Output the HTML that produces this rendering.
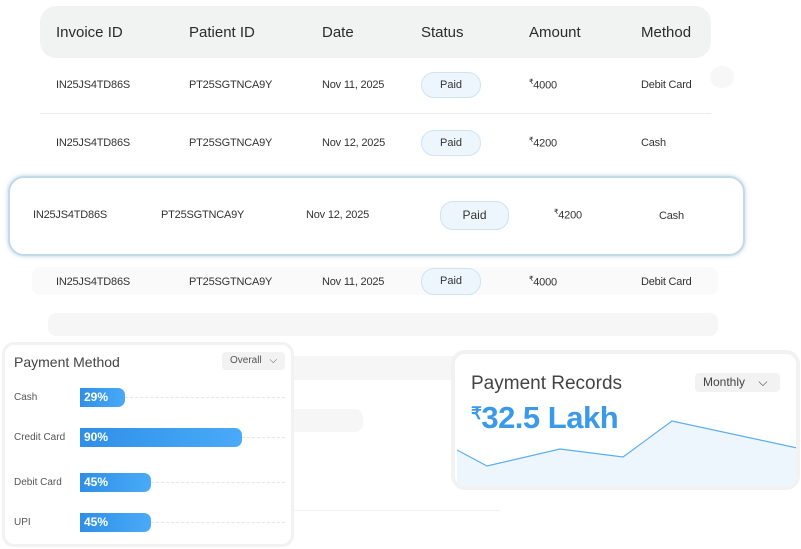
<!DOCTYPE html>
<html><head><meta charset="utf-8"><style>
*{margin:0;padding:0;box-sizing:border-box}
body{width:801px;height:549px;background:#fff;position:relative;overflow:hidden;font-family:"Liberation Sans",sans-serif;color:#333}
.a{position:absolute}
.hd{font-size:15px;color:#2b2b2b;top:24px}
.c{font-size:11px;color:#333;letter-spacing:-0.2px}
.pill{position:absolute;background:#eef6fd;border:1px solid #cfe3f3;border-radius:13px;font-size:11px;text-align:center;color:#333}
.ph{position:absolute;background:#f6f6f6;border-radius:8px}
.bar{position:absolute;left:80px;height:19px;border-radius:0 7px 7px 0;background:linear-gradient(90deg,#2f8fe6,#4aaaf8);color:#fff;font-size:12px;font-weight:bold;line-height:19px;padding-left:4px}
.lbl{position:absolute;left:14px;font-size:10px;color:#555}
.dash{position:absolute;border-top:1px dashed #e6e6e6;right:10px}
</style></head><body>
<!-- header -->
<div class="a" style="left:40px;top:6px;width:671px;height:52px;background:#f1f2f2;border-radius:16px"></div>
<div class="a hd" style="left:56px">Invoice ID</div>
<div class="a hd" style="left:189px">Patient ID</div>
<div class="a hd" style="left:322px">Date</div>
<div class="a hd" style="left:421px">Status</div>
<div class="a hd" style="left:529px">Amount</div>
<div class="a hd" style="left:641px">Method</div>
<div class="ph" style="left:710px;top:66px;width:24px;height:22px;border-radius:11px;background:#f7f7f7"></div>
<!-- row1 -->
<div class="a c" style="left:56px;top:79px">IN25JS4TD86S</div>
<div class="a c" style="left:189px;top:79px">PT25SGTNCA9Y</div>
<div class="a c" style="left:322px;top:79px">Nov 11, 2025</div>
<div class="pill" style="left:421px;top:72px;width:60px;height:26px;line-height:24px">Paid</div>
<div class="a c" style="left:529px;top:78px"><sup style="font-size:7px">₹</sup>4000</div>
<div class="a c" style="left:641px;top:79px">Debit Card</div>
<div class="a" style="left:40px;top:113px;width:671px;border-top:1px solid #ececec"></div>
<!-- row2 -->
<div class="a c" style="left:56px;top:137px">IN25JS4TD86S</div>
<div class="a c" style="left:189px;top:137px">PT25SGTNCA9Y</div>
<div class="a c" style="left:322px;top:137px">Nov 12, 2025</div>
<div class="pill" style="left:421px;top:130px;width:60px;height:26px;line-height:24px">Paid</div>
<div class="a c" style="left:529px;top:136px"><sup style="font-size:7px">₹</sup>4200</div>
<div class="a c" style="left:641px;top:137px">Cash</div>
<!-- highlight -->
<div class="a" style="left:8px;top:176px;width:737px;height:80px;border:2px solid #c6d9ea;border-radius:16px;background:#fff;box-shadow:0 0 4px rgba(120,160,200,.5)"></div>
<div class="a c" style="left:33px;top:209px">IN25JS4TD86S</div>
<div class="a c" style="left:161px;top:209px">PT25SGTNCA9Y</div>
<div class="a c" style="left:306px;top:209px">Nov 12, 2025</div>
<div class="pill" style="left:440px;top:201px;width:69px;height:29px;line-height:27px;font-size:12px">Paid</div>
<div class="a c" style="left:554px;top:208px"><sup style="font-size:7px">₹</sup>4200</div>
<div class="a c" style="left:659px;top:210px">Cash</div>
<!-- row4 -->
<div class="ph" style="left:32px;top:267px;width:686px;height:28px;background:#fafafa"></div>
<div class="a c" style="left:56px;top:276px">IN25JS4TD86S</div>
<div class="a c" style="left:189px;top:276px">PT25SGTNCA9Y</div>
<div class="a c" style="left:322px;top:276px">Nov 11, 2025</div>
<div class="pill" style="left:421px;top:268px;width:60px;height:27px;line-height:25px">Paid</div>
<div class="a c" style="left:529px;top:275px"><sup style="font-size:7px">₹</sup>4000</div>
<div class="a c" style="left:641px;top:276px">Debit Card</div>
<div class="ph" style="left:48px;top:313px;width:670px;height:23px"></div>
<div class="ph" style="left:190px;top:356px;width:290px;height:24px"></div>
<div class="ph" style="left:190px;top:409px;width:173px;height:23px"></div>
<div class="a" style="left:200px;top:510px;width:300px;border-top:1px solid #f3f3f3"></div>
<!-- payment method -->
<div class="a" style="left:2px;top:342px;width:292px;height:205px;border:3px solid #f2f2f2;border-radius:12px;background:#fff"></div>
<div class="a" style="left:14px;top:354px;font-size:14px;color:#444">Payment Method</div>
<div class="a" style="left:222px;top:352px;width:63px;height:18px;background:#f2f2f2;border-radius:4px;font-size:10px;color:#555;line-height:18px;padding-left:8px">Overall <span style="margin-left:5px">⌵</span></div>
<div class="lbl" style="top:392px">Cash</div>
<div class="lbl" style="top:432px">Credit Card</div>
<div class="lbl" style="top:477px">Debit Card</div>
<div class="lbl" style="top:517px">UPI</div>
<div class="dash" style="left:125px;top:397px;right:515px;width:160px"></div>
<div class="dash" style="left:242px;top:437px;width:43px"></div>
<div class="dash" style="left:151px;top:482px;width:134px"></div>
<div class="dash" style="left:151px;top:522px;width:134px"></div>
<div class="bar" style="top:388px;width:45px">29%</div>
<div class="bar" style="top:428px;width:162px">90%</div>
<div class="bar" style="top:473px;width:71px">45%</div>
<div class="bar" style="top:513px;width:71px">45%</div>
<!-- payment records -->
<div class="a" style="left:451px;top:350px;width:349px;height:140px;border:4px solid #f2f2f2;border-radius:14px;background:#fff;overflow:hidden">
<svg width="345" height="136" style="position:absolute;left:2px;top:-1px">
<path d="M0 97 L30 113 L103 96 L166 104 L215 68 L345 96 L345 136 L0 136Z" fill="#eef6fd"/>
<path d="M0 97 L30 113 L103 96 L166 104 L215 68 L345 96" fill="none" stroke="#5aaef0" stroke-width="1.2"/>
</svg>
</div>
<div class="a" style="left:471px;top:373px;font-size:19px;color:#444">Payment Records</div>
<div class="a" style="left:695px;top:373px;width:85px;height:19px;background:#f2f2f2;border-radius:4px;font-size:12px;color:#444;line-height:19px;padding-left:8px">Monthly <span style="margin-left:10px">⌵</span></div>
<div class="a" style="left:471px;top:400px;font-size:31px;font-weight:bold;color:#3a9ae9;letter-spacing:-0.5px"><span style="font-size:17px;vertical-align:9px">₹</span>32.5 Lakh</div>
</body></html>
